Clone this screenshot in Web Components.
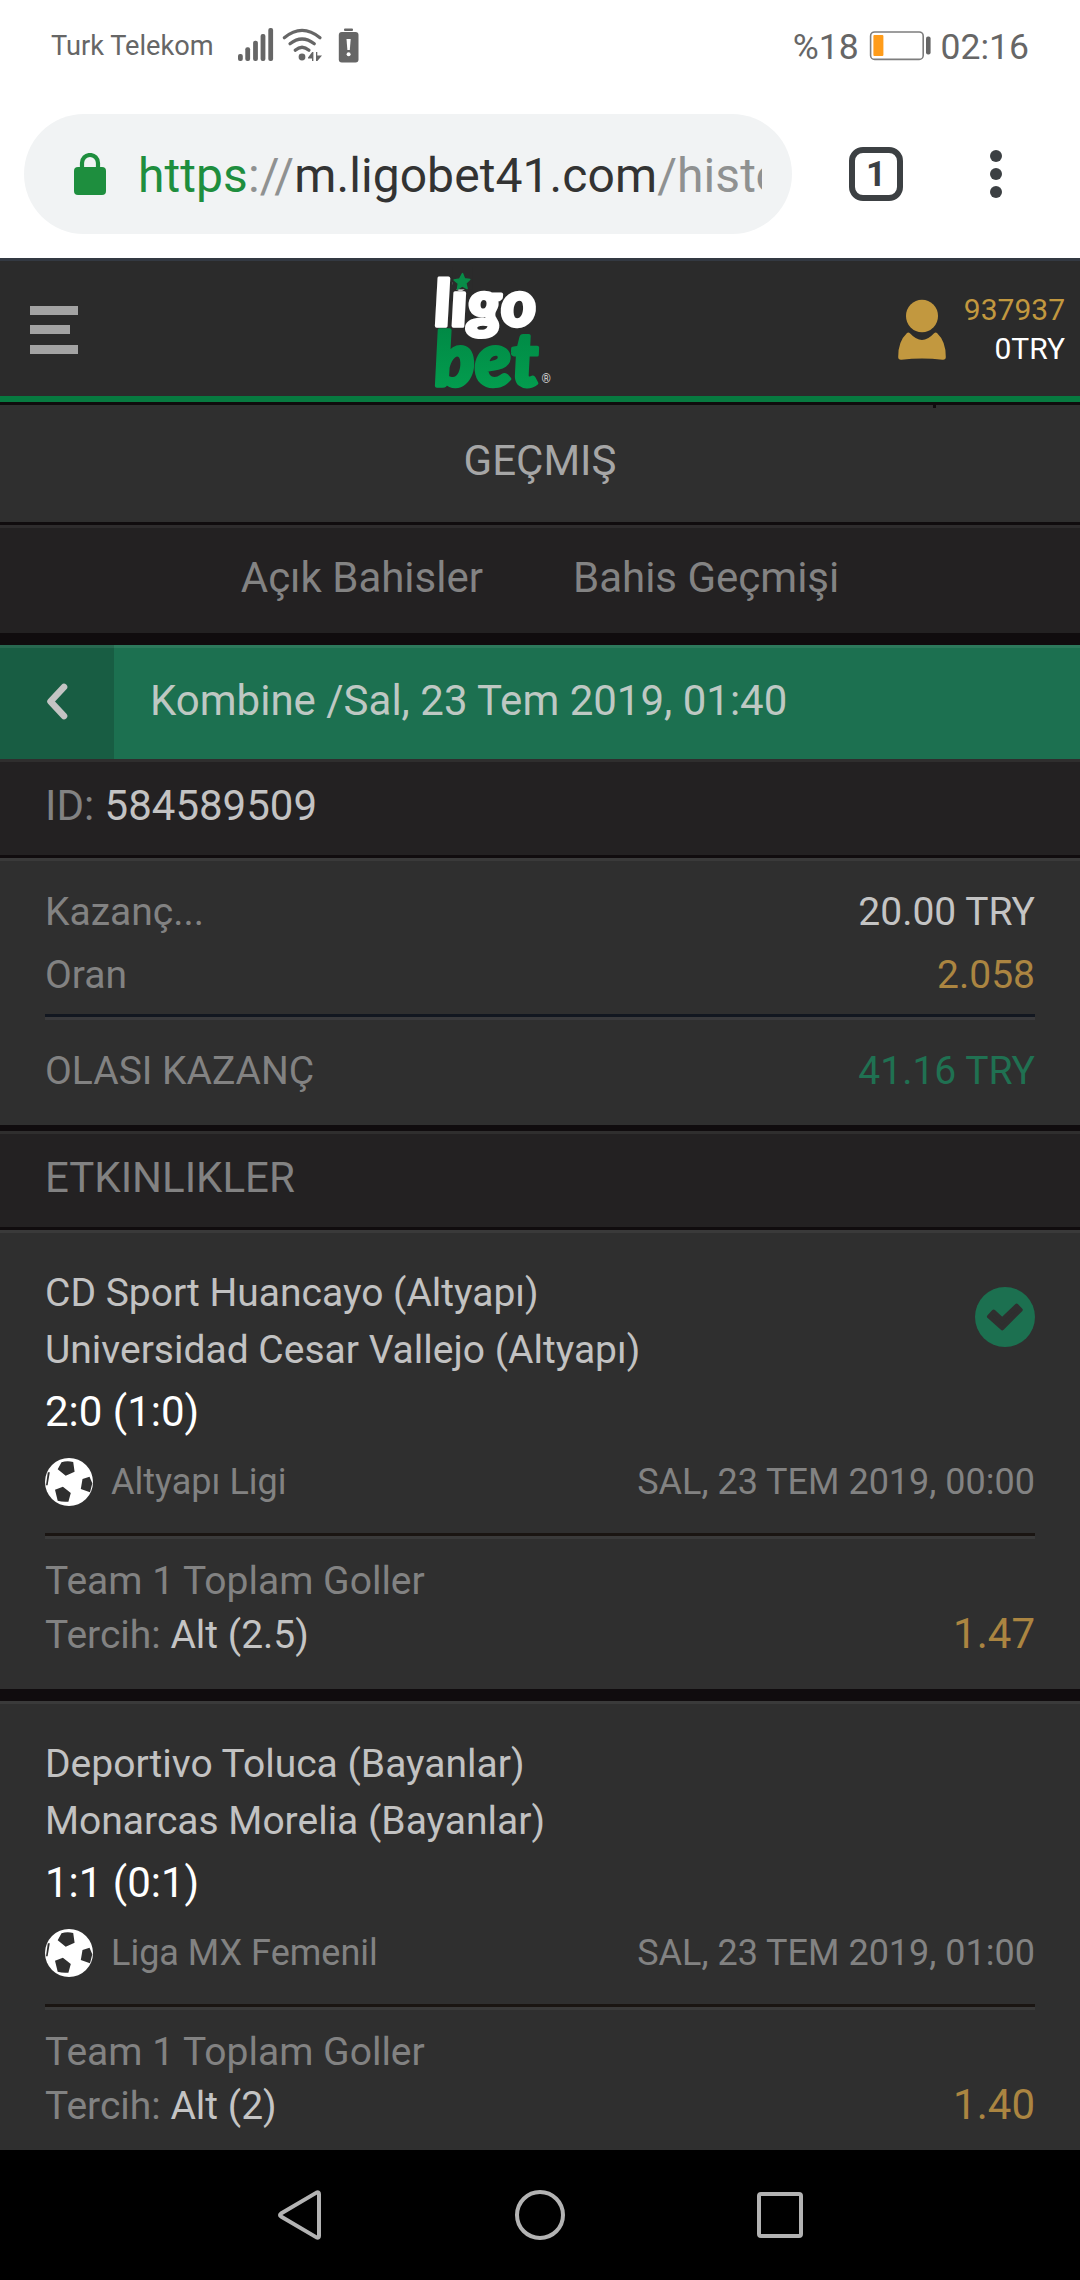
<!DOCTYPE html>
<html lang="tr">
<head>
<meta charset="utf-8">
<title>Ligobet</title>
<style>
  html, body { margin: 0; padding: 0; background: #000; }
  body { width: 1080px; height: 2280px; overflow: hidden; font-family: Roboto, "Noto Sans", sans-serif; }
</style>
</head>
<body>
<phone-screen>
  <status-bar slot="system" carrier="Turk Telekom" battery="%18" time="02:16"></status-bar>
  <browser-bar slot="system" tabs="1"></browser-bar>
  <site-header user="937937" balance="0TRY"></site-header>
  <page-title>GEÇMIŞ</page-title>
  <tab-row><span>Açık Bahisler</span><span>Bahis Geçmişi</span></tab-row>
  <bet-heading>Kombine /Sal, 23 Tem 2019, 01:40</bet-heading>
  <info-bar>ID: <span slot="value">584589509</span></info-bar>
  <bet-summary></bet-summary>
  <info-bar class="events">ETKINLIKLER</info-bar>
  <match-card home="CD Sport Huancayo (Altyapı)" away="Universidad Cesar Vallejo (Altyapı)" score="2:0 (1:0)" league="Altyapı Ligi" date="SAL, 23 TEM 2019, 00:00" market="Team 1 Toplam Goller" pick="Alt (2.5)" odds="1.47" won></match-card>
  <match-card home="Deportivo Toluca (Bayanlar)" away="Monarcas Morelia (Bayanlar)" score="1:1 (0:1)" league="Liga MX Femenil" date="SAL, 23 TEM 2019, 01:00" market="Team 1 Toplam Goller" pick="Alt (2)" odds="1.40"></match-card>
  <nav-bar slot="nav"></nav-bar>
</phone-screen>
<script>
const define = (name, render) => customElements.define(name, class extends HTMLElement {
  connectedCallback() {
    if (this.shadowRoot) return;
    this.attachShadow({ mode: 'open' }).innerHTML =
      '<style>*{box-sizing:border-box}:host{display:block;box-sizing:border-box}svg{display:block;flex:none}</style>' +
      render(k => this.getAttribute(k) || '', this);
  }
});

define('phone-screen', () => `
<style>
  :host { display: flex; flex-direction: column; width: 1080px; height: 2280px; overflow: hidden; }
  main { flex: 1; min-height: 0; overflow: hidden; background: #100c0e; }
</style>
<slot name="system"></slot><main><slot></slot></main><slot name="nav"></slot>`);

define('status-bar', a => `
<style>
  :host { display: flex; align-items: center; height: 90px; padding: 0 51px; background: #fff; color: #666; }
  .carrier { width: 162px; white-space: nowrap; font-size: 27.2px; line-height: 90px; padding-top: 2px; }
  .icons { margin-left: 25px; }
  .right { margin-left: auto; display: flex; align-items: center; font-size: 35.5px; line-height: 90px; padding-top: 4px; }
  .right svg { margin: -2px 10px 0; }
</style>
<span class="carrier">${a('carrier')}</span>
<svg class="icons" width="122" height="90" viewBox="238 0 122 90" fill="#666">
  <rect x="238" y="54" width="4.8" height="7" rx="2"/><rect x="245.3" y="47.3" width="4.8" height="13.7" rx="2"/>
  <rect x="253.1" y="40.7" width="4.8" height="20.3" rx="2"/><rect x="260.6" y="34" width="4.8" height="27" rx="2"/>
  <rect x="268.3" y="28" width="4.8" height="33" rx="2"/>
  <g fill="none" stroke="#666" stroke-width="3.2" stroke-linecap="round">
    <path d="M284.3 37.7Q302 23 320 37.7"/><path d="M290 43.8Q302 34.2 314.3 43.8"/><path d="M295.2 50.3Q302 44.2 309 50.3"/>
  </g>
  <circle cx="302" cy="57" r="3.4"/>
  <path d="M308 57.5l4.2-5.5h1.2v9h-1.4v-2.6h-4zM316 52h1.3v3.4h4.7l-4.6 5.6H316z"/>
  <rect x="344" y="28.6" width="9" height="2.4" rx="1"/>
  <rect x="338.8" y="32" width="19.7" height="30.4" rx="3"/>
  <path d="M346.5 39h4.2l-.9 11h-2.4z" fill="#fff"/><circle cx="348.6" cy="54.3" r="2" fill="#fff"/>
</svg>
<div class="right"><span>${a('battery')}</span>
<svg width="62" height="30" viewBox="868 31 62 30"><rect x="869.6" y="32" width="52.6" height="27.4" rx="4" fill="none" stroke="#7d7d7d" stroke-width="1.6"/><rect x="872.4" y="35" width="10" height="21" rx="1" fill="#ff9c1a"/><rect x="925" y="36.5" width="4.6" height="18" rx="2" fill="#666"/></svg>
<span>${a('time')}</span></div>`);

define('browser-bar', a => `
<style>
  :host { display: flex; align-items: flex-start; height: 171px; padding: 24px; background: #fff; border-bottom: 3px solid #333942; }
  .pill { display: flex; align-items: center; width: 768px; height: 120px; border-radius: 60px; background: #f1f3f4; padding: 0 30px 0 50px; }
  .url { width: 624px; margin-left: 32px; overflow: hidden; white-space: nowrap; font-size: 48px; letter-spacing: .08px; line-height: 120px; color: #333; padding-top: 3px; }
  .s { color: #1e8e3e } .g { color: #8f9191 }
  .tabs { margin: 33px 0 0 57px; width: 54px; height: 54px; border: 6px solid #3c4043; border-radius: 14px; color: #3c4043; font-weight: 700; font-size: 35px; line-height: 43px; text-align: center; }
  .dots { margin: 36px 0 0 84px; }
</style>
<div class="pill">
  <svg width="32" height="42" viewBox="0 0 32 42"><path d="M8 16V10a8 8 0 0 1 16 0v6" fill="none" stroke="#1e8e3e" stroke-width="4.2"/><rect y="14" width="32" height="28" rx="4" fill="#1e8e3e"/></svg>
  <div class="url"><span class="s">https</span><span class="g">://</span>m.ligobet41.com<span class="g">/history</span></div>
</div>
<div class="tabs">${a('tabs')}</div>
<svg class="dots" width="18" height="48" viewBox="-9 -24 18 48" fill="#3c4043"><circle cy="-18" r="6"/><circle r="6"/><circle cy="18" r="6"/></svg>`);

define('site-header', a => `
<style>
  :host { height: 144px; background: #2b2b2b; border-bottom: 3px solid #0f0c0d; }
  .bar { display: flex; height: 141px; border-bottom: 6px solid #077a40; padding: 0 15px 0 30px; }
  .menu { margin-top: 45px; }
  .logo { margin: 6px 0 0 352px; overflow: visible; }
  .user { margin: 38px 0 0 343px; }
  .account { flex: 1; text-align: right; font-size: 30px; line-height: 39px; color: #fff; padding-top: 29px; }
  .name { color: #c2983f; }
</style>
<div class="bar">
<svg class="menu" width="48" height="48" fill="#a3a3a3"><rect width="48" height="9"/><rect y="19" width="40" height="9"/><rect y="39" width="48" height="9"/></svg>
<svg class="logo" width="125" height="126" viewBox="430 267 125 126" font-family="Lato" font-weight="900" font-style="italic">
  <defs><linearGradient id="g" x1="0" y1="0" x2="0" y2="1"><stop offset="0" stop-color="#008443"/><stop offset="1" stop-color="#03a150"/></linearGradient></defs>
  <g transform="translate(435.500 325.500) skewX(4)"><text font-size="64" textLength="102" lengthAdjust="spacingAndGlyphs" fill="#fff" stroke="#fff" stroke-width="3.400" stroke-linejoin="round">ligo</text></g>
  <rect x="452.500" y="267" width="20" height="22.500" fill="#2b2b2b"/>
  <path d="M462.500 273.600l2 5.200 5.300.6-4 3.800 1.300 5.400-4.900-2.700-4.700 3.200.8-5.600-4.200-3.600 5.600-1z" fill="#088c48" stroke="#088c48" stroke-width="1.500" stroke-linejoin="round"/>
  <g transform="translate(435.500 385.500) skewX(4)"><text font-size="75" textLength="105" lengthAdjust="spacingAndGlyphs" fill="url(#g)" stroke="url(#g)" stroke-width="3.600" stroke-linejoin="round">bet</text></g>
  <text x="541.500" y="383" font-size="12" font-family="Roboto" font-weight="700" font-style="normal" fill="#c5c5c5">®</text>
</svg>
<svg class="user" width="48" height="62" viewBox="0 0 48 62" fill="#c2983f"><ellipse cx="24" cy="17" rx="16" ry="16.300"/><path d="M9 34q1.500-1.200 3.200.6Q18 41 24 41t11.800-6.400Q37.500 32.800 39 34q9 8.500 8.800 24 0 3-3.300 2.700Q24 58.500 3.500 60.700.2 61 .2 58 0 42.500 9 34z"/></svg>
<div class="account"><div class="name">${a('user')}</div><div>${a('balance')}</div></div>
</div>`);

define('page-title', () => `
<style>
  :host { height: 117px; background: #2f2f2f; color: #a6a6a6; font-size: 42px; line-height: 111px; text-align: center; }
  i { position: absolute; left: 933px; top: 405px; width: 3px; height: 3px; background: #100c0e; }
</style><i></i><slot></slot>`);

define('tab-row', () => `
<style>
  :host { display: flex; justify-content: center; gap: 90px; margin-top: 3px; height: 108px; border-top: 3px solid #2e2c2d; background: #232122; color: #838383; font-size: 42px; line-height: 99px; }
</style><slot></slot>`);

define('bet-heading', () => `
<style>
  :host { display: flex; height: 114px; margin-top: 12px; background: #1c7050; color: #bec8c3; font-size: 42px; }
  .back { width: 114px; border-top: 3px solid #286850; background: #185d43; padding: 35px 0 0 46px; }
  .text { flex: 1; border-top: 3px solid #2d795c; padding-left: 36px; line-height: 105px; }
</style>
<div class="back"><svg width="22" height="37" viewBox="0 0 22 37"><path d="M18 4L4.500 18.500 18 33" fill="none" stroke="#c4c4c4" stroke-width="6.600" stroke-linecap="round" stroke-linejoin="round"/></svg></div>
<div class="text"><slot></slot></div>`);

define('info-bar', () => `
<style>
  :host { height: 96px; border-top: 3px solid #2f2e2e; background: #232122; color: #828282; font-size: 42px; line-height: 87px; padding-left: 45px; }
  :host(.events) { margin-top: 6px; }
  ::slotted([slot=value]) { color: #c3c3c3; }
</style><slot></slot> <slot name="value"></slot>`);

define('bet-summary', () => `
<style>
  :host { height: 267px; margin-top: 3px; border-top: 3px solid #3a3a3a; background: #2f2f2f; padding: 20px 45px 0; font-size: 39px; line-height: 63px; color: #828282; }
  div { display: flex; justify-content: space-between; }
  .total { margin-top: 7px; border-top: 3px solid #121720; box-shadow: inset 0 3px #3a3a3c; line-height: 102px; padding-top: 3px; }
  .stake { color: #c4c4c4 } .odds { color: #ab8541 } .win { color: #207152 }
</style>
<div><span>Kazanç...</span><span class="stake">20.00 TRY</span></div>
<div><span>Oran</span><span class="odds">2.058</span></div>
<div class="total"><span>OLASI KAZANÇ</span><span class="win">41.16 TRY</span></div>`);

define('match-card', (a, el) => `
<style>
  :host { height: 459px; margin-top: 3px; border-top: 3px solid #3a3a3a; background: #2f2f2f; padding: 32px 45px 0; color: #828282; font-size: 39px; }
  :host(:not([won])) { margin-top: 12px; }
  .top, .league, .bottom { display: flex; justify-content: space-between; }
  .teams { line-height: 57px; color: #c2c2c2; }
  .check { margin-top: 22px; }
  .score { color: #fff; font-size: 42px; line-height: 66px; }
  .league { align-items: center; margin-top: 13px; height: 48px; font-size: 36px; line-height: 48px; }
  .name { flex: 1; margin-left: 18px; }
  .bottom { margin-top: 27px; border-top: 3px solid #1a1512; box-shadow: inset 0 3px #3a3a3a; padding-top: 18px; line-height: 54px; align-items: flex-end; }
  b { font-weight: 400; color: #c4c4c4; }
  .odds { font-size: 42px; line-height: 56px; color: #ab8541; }
</style>
<div class="top"><div class="teams"><div>${a('home')}</div><div>${a('away')}</div></div>
${el.hasAttribute('won') ? '<svg class="check" width="60" height="60" viewBox="0 0 60 60"><circle cx="30" cy="30" r="30" fill="#1c7050"/><path d="M14 29.600l4.600-5 8.600 7.800L41.600 18.600l4.100 4.200-18.500 18.500z" fill="#2f2f2f" stroke="#2f2f2f" stroke-width="4" stroke-linejoin="round"/></svg>' : ''}</div>
<div class="score">${a('score')}</div>
<div class="league">
<svg width="48" height="48" viewBox="0 0 48 48"><circle cx="24" cy="24" r="24" fill="#fff"/><path fill="#2f2f2f" d="M16.500 4.300Q22 2.500 28.200 4l1.400 9.700-8.900 4-8-6.400zM10 31.700l7.900-3 7.900 6.300-2.400 8.700q-6 .6-10.700-1zM37.500 21l7-2.300 2.800 6.600-2.300 9-9.200-3.300zM2.800 14.300h2L2.600 27.300H1z"/></svg>
<span class="name">${a('league')}</span><span>${a('date')}</span></div>
<div class="bottom"><div><div>${a('market')}</div><div>Tercih: <b>${a('pick')}</b></div></div><span class="odds">${a('odds')}</span></div>`);

define('nav-bar', () => `
<style>
  :host { display: flex; justify-content: center; align-items: center; height: 130px; background: #000; gap: 188px; }
</style>
<svg width="52" height="52" viewBox="-26 -26 52 52" fill="none" stroke="#b3b3b3" stroke-width="4" stroke-linejoin="round"><path d="M-19 -1.500L16.500 -22.400Q19 -23.400 19 -21V21Q19 23.400 16.500 22.400L-19 1.500Q-21 0 -19 -1.500z"/></svg>
<svg width="52" height="52" viewBox="-26 -26 52 52" fill="none" stroke="#b3b3b3" stroke-width="4"><circle r="23"/></svg>
<svg width="52" height="52" viewBox="-26 -26 52 52" fill="none" stroke="#b3b3b3" stroke-width="4"><rect x="-21" y="-21" width="42" height="42" rx="2"/></svg>`);
</script>
</body>
</html>
